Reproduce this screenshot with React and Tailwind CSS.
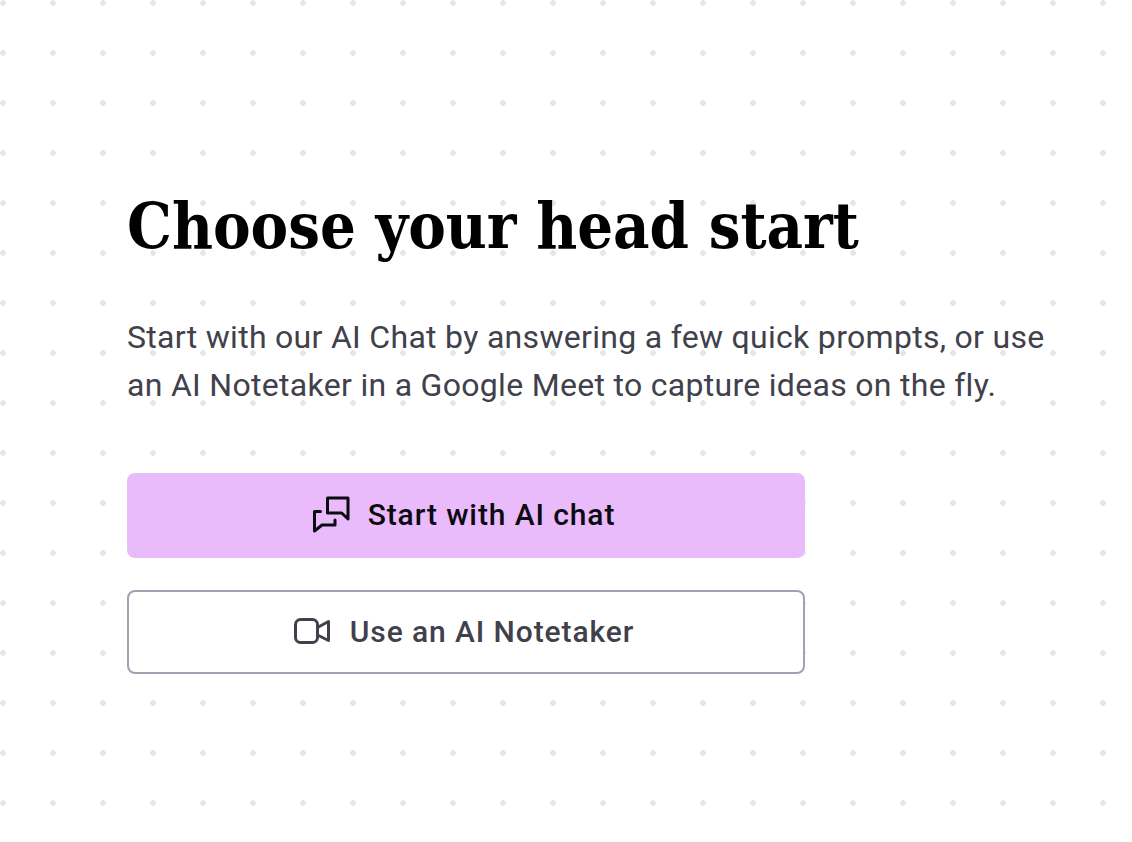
export default function App() {
    return (
        <div className="h-[842px] w-full overflow-hidden bg-white bg-[radial-gradient(circle_at_3px_3px,#e6e6e6_2.6px,transparent_3.1px)] bg-[length:50px_50px] pl-[127px] pt-[190px] font-['Roboto',sans-serif]">
            <h1 className="font-['DejaVu_Serif_Condensed','DejaVu_Serif',serif] text-[62.7px] leading-[72px] font-bold text-black">
                Choose your head start
            </h1>

            <p className="mt-[51px] w-[960px] text-[32px] leading-[48px] tracking-[0.3px] text-[#40414b]">
                Start with our AI Chat by answering a few quick prompts, or use
                <br />
                an AI Notetaker in a Google Meet to capture ideas on the fly.
            </p>

            <div className="mt-[64px] flex w-[678px] flex-col gap-[32px]">
                <button className="flex h-[85px] items-center justify-center gap-[18px] rounded-lg bg-[#e9bbfa] pr-[5px] pb-[2px] text-[30px] font-medium tracking-[0.9px] text-[#0c0a12]">
                    <svg width="38" height="38" viewBox="0 0 38 38" fill="none" stroke="currentColor" strokeWidth="3" strokeLinejoin="round" strokeLinecap="round">
                        <path d="M15.5 2H36V23L29.7 17H15.5Z" />
                        <path d="M8.5 15.5H2.5V35L10 29H23V24" />
                    </svg>
                    Start with AI chat
                </button>
                <button className="flex h-[84px] items-center justify-center gap-[20px] rounded-lg border-2 border-[#9fa2b0] bg-white pr-[4px] pb-[2px] text-[30px] font-medium tracking-[0.9px] text-[#40414b]">
                    <svg width="36" height="28" viewBox="0 0 36 28" fill="none" stroke="currentColor" strokeWidth="3" strokeLinejoin="round" strokeLinecap="round">
                        <rect x="1.5" y="2.5" width="22" height="23" rx="5" />
                        <path d="M23.5 10.5L34.5 4.5V23.5L23.5 18" />
                    </svg>
                    Use an AI Notetaker
                </button>
            </div>
        </div>
    );
}
